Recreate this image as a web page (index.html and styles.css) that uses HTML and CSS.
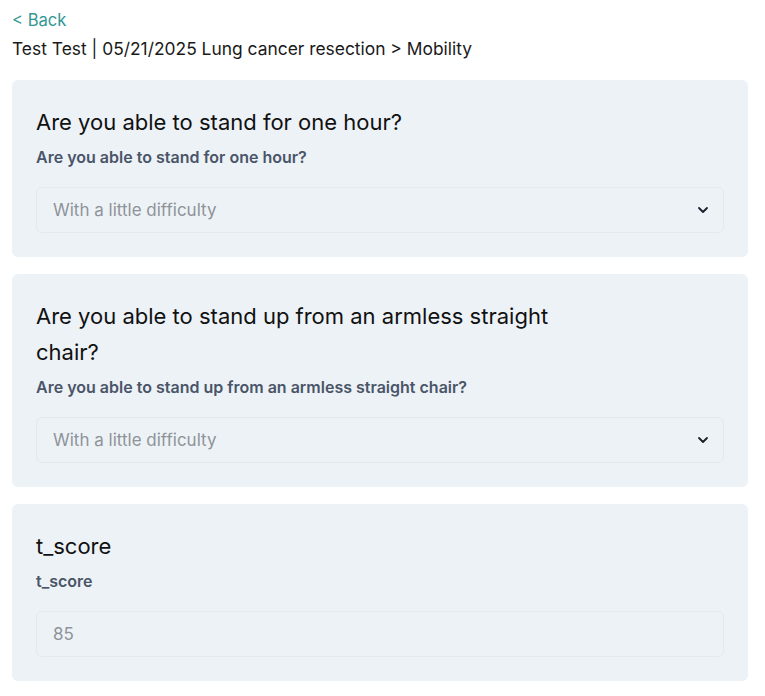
FILE: index.html
```html
<!DOCTYPE html>
<html lang="en">
<head>
<meta charset="utf-8">
<title>Mobility</title>
<link rel="stylesheet" href="styles.css">
</head>
<body>
<div class="page">
  <a class="back" href="#">&lt; Back</a>
  <div class="crumb">Test Test | 05/21/2025 Lung cancer resection &gt; Mobility</div>
  <div class="cards">
    <section class="card">
      <h2 class="title">Are you able to stand for one hour?</h2>
      <label class="label">Are you able to stand for one hour?</label>
      <div class="field">
        <span class="value">With a little difficulty</span>
        <svg class="chev" width="12" height="8" viewBox="0 0 12 8"><path d="M2 2l4 4 4-4" fill="none" stroke="#1a202c" stroke-width="1.8" stroke-linecap="round" stroke-linejoin="round"/></svg>
      </div>
    </section>
    <section class="card">
      <h2 class="title">Are you able to stand up from an armless straight chair?</h2>
      <label class="label">Are you able to stand up from an armless straight chair?</label>
      <div class="field">
        <span class="value">With a little difficulty</span>
        <svg class="chev" width="12" height="8" viewBox="0 0 12 8"><path d="M2 2l4 4 4-4" fill="none" stroke="#1a202c" stroke-width="1.8" stroke-linecap="round" stroke-linejoin="round"/></svg>
      </div>
    </section>
    <section class="card">
      <h2 class="title">t_score</h2>
      <label class="label">t_score</label>
      <div class="field">
        <span class="value">85</span>
      </div>
    </section>
  </div>
</div>
</body>
</html>
```
FILE: styles.css
```css
* { box-sizing: border-box; }
html, body { margin: 0; padding: 0; background: #ffffff; }
body {
  font-family: Inter, "Noto Sans", "Liberation Sans", sans-serif;
  color: #1a202c;
}
.page {
  padding: 8px 17px 0 12px;
}
.back {
  display: block;
  color: #319795;
  text-decoration: none;
  font-size: 16.6px;
  line-height: 24px;
}
.crumb {
  font-size: 17.4px;
  line-height: 24px;
  margin-top: 5px;
  color: #1a1a1a;
}
.cards {
  margin-top: 19px;
  display: flex;
  flex-direction: column;
  gap: 17px;
}
.card {
  background: #edf2f7;
  border-radius: 6px;
  padding: 24px 24px 24px;
}
.title {
  margin: 0;
  font-size: 22px;
  font-weight: 400;
  line-height: 36px;
  max-width: 540px;
  color: #111;
}
.label {
  display: block;
  padding-top: 5px;
  font-size: 16px;
  line-height: 24px;
  font-weight: 600;
  color: #4a5568;
  margin-bottom: 18px;
}
.field {
  height: 46px;
  border: 1px solid #e4e9ef;
  border-radius: 6px;
  display: flex;
  align-items: center;
  justify-content: space-between;
  padding: 0 14px 0 16px;
}
.value {
  font-size: 17px;
  color: #8f9399;
}
.chev { display: block; }
```
